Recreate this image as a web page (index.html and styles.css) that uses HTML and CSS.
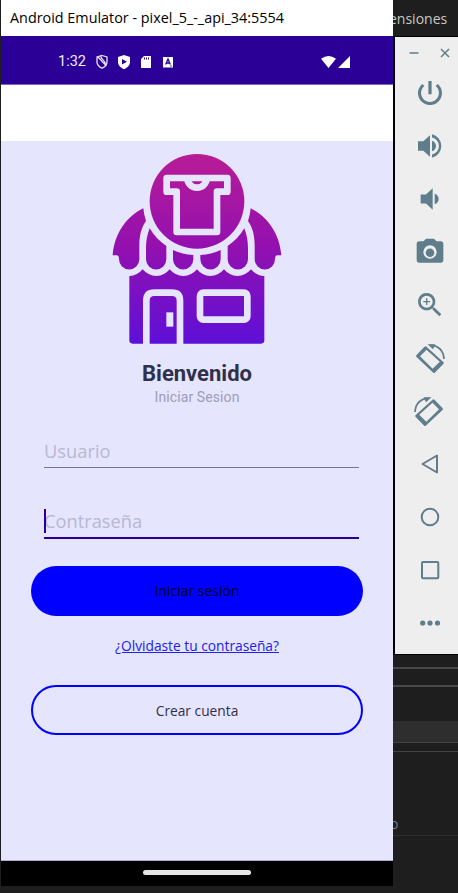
FILE: index.html
```html
<!DOCTYPE html>
<html lang="es">
<head>
<meta charset="utf-8">
<title>Android Emulator</title>
<link rel="stylesheet" href="styles.css">
</head>
<body>
<div class="desktop">
  <main class="phone">
    <header class="titlebar"><span>Android Emulator - pixel_5_-_api_34:5554</span></header>
    <div class="status">
      <span class="clock">1:32</span>
      <svg class="st" viewBox="0 0 14 16"><path d="M7 1.500 12 3v5c0 3-2.500 5-5 6.200C4.500 13 2 11 2 8V3zM3 3l8.500 9M6 2.500c-.5 3 5 3.500 4.500 8.500" fill="none" stroke="#e9e3f7" stroke-width="1.300"/></svg>
      <svg class="st" viewBox="0 0 14 16"><path fill="#fff" fill-rule="evenodd" d="M7 1l6 2v5c0 3.500-3 6-6 7.200C4 14 1 11.500 1 8V3zM5 5v5.500L10 7.700z"/></svg>
      <svg class="st" viewBox="0 0 14 16"><path fill="#fff" fill-rule="evenodd" d="M5 2h7v12H2V5zM5 3.500v2h1v-2zm2 0v2h1v-2zm2 0v2h1v-2z"/></svg>
      <svg class="st" viewBox="0 0 14 16"><path fill="#fff" d="M2 3h10v10.500H2z"/><path d="M4.700 10.500 7 5l2.300 5.500M5.500 9h3M9.500 12h1" fill="none" stroke="#2a0097" stroke-width="1.300"/></svg>
      <svg class="signal" viewBox="0 0 30 14"><path fill="#fff" d="M0 3.700Q7.500-1.500 15 3.700L7.500 13zM29 1v12H17z"/></svg>
    </div>
    <div class="appbar"></div>
    <section class="login">
      <svg class="logo" viewBox="0 0 585 615">
        <defs>
          <linearGradient id="g" gradientUnits="userSpaceOnUse" x1="0" y1="28" x2="0" y2="596"><stop offset="0" stop-color="#b81c96"/><stop offset=".5" stop-color="#9210b0"/><stop offset="1" stop-color="#5e10d8"/></linearGradient>
        </defs>
        <g fill="url(#g)">
          <circle cx="291" cy="169" r="142"/>
          <path d="M130 190C82 213 43 264 38 331h12q7 0 7 12a30.500 30.500 0 0 0 61 0V300C118 267 126 245 138 228Q132 210 130 190z"/>
          <path d="M149 250C141 270 138 290 138 310V343a30.500 30.500 0 0 0 61 0V303C179 290 162 272 149 250z"/>
          <path d="M219 315V343a30.500 30.500 0 0 0 61 0V330Q247 328 219 315z"/>
          <path d="M452 190C500 213 539 264 544 331h-12q-7 0-7 12a30.500 30.500 0 0 1-61 0V300C464 267 456 245 444 228Q450 210 452 190z"/>
          <path d="M433 250C441 270 444 290 444 310V343a30.500 30.500 0 0 1-61 0V303C403 290 420 272 433 250z"/>
          <path d="M362 315V343a30.500 30.500 0 0 1-61 0V330Q334 328 362 315z"/>
          <path d="M88 393Q112 392 128 373Q144 392 169 393Q194 392 209 373Q225 392 250 393Q275 392 291 373Q306 392 331 393Q356 392 372 373Q388 392 412 393Q437 392 453 373Q469 392 493 393V586q0 10-10 10H98q-10 0-10-10z"/>
        </g>
        <g class="cut">
          <path d="M200 99H382V140H351V261H230V140H200z"/>
          <path d="M262 99A29 29 0 0 0 320 99"/>
          <path d="M139 600V467Q139 443 163 443H216Q240 443 240 467V600"/>
          <rect x="300" y="443" width="142" height="81" rx="10"/>
        </g>
        <path class="handle" d="M199 502h21v43h-21z"/>
      </svg>
      <h1>Bienvenido</h1>
      <p class="sub">Iniciar Sesion</p>
      <div class="field user">Usuario</div>
      <div class="field pass">Contraseña</div>
      <div class="btn primary">Iniciar sesión</div>
      <a class="forgot">¿Olvidaste tu contraseña?</a>
      <div class="btn outline">Crear cuenta</div>
    </section>
    <footer class="nav"><i></i></footer>
  </main>
  <aside class="side">
    <div class="menu">ensiones</div>
    <div class="tools">
      <svg class="winctl" viewBox="0 0 64 29"><path d="M14.500 16h9M46 12l8 8m0-8-8 8" fill="none" stroke="#607d8b" stroke-width="1.500"/></svg>
      <svg viewBox="0 0 24 24"><path d="M13.200 3h-2.400v10h2.400zm4.630 2.170-1.600 1.600A6.700 6.700 0 0 1 18.700 12a6.700 6.700 0 1 1-10.900-5.230L6.170 5.170A9 9 0 1 0 21 12a8.940 8.940 0 0 0-3.170-6.830z"/></svg>
      <svg viewBox="0 0 24 24"><path d="M3 8.500v7h4l5 4.500V4L7 8.500zm13.500 3.500A4.500 4.500 0 0 0 13.500 7.970v8.050A4.470 4.470 0 0 0 16.500 12zM13.500 3.230v2.400a6.500 6.500 0 0 1 0 12.740v2.400a9 9 0 0 0 0-17.540z"/></svg>
      <svg viewBox="0 0 24 24"><path d="M18.500 12A4.500 4.500 0 0 0 15.500 7.970v8.050A4.470 4.470 0 0 0 18.500 12zM5 8.700v6.600h4l5 4.700V4L9 8.700z"/></svg>
      <svg viewBox="0 0 24 24"><circle cx="12" cy="12.500" r="3.200"/><path d="M9 2 7.170 4H4a2 2 0 0 0-2 2v12a2 2 0 0 0 2 2h16a2 2 0 0 0 2-2V6a2 2 0 0 0-2-2h-3.170L15 2zm3 15a5 5 0 1 1 0-10 5 5 0 0 1 0 10z"/></svg>
      <svg viewBox="0 0 24 24"><path d="M15.500 14h-.79l-.28-.27A6.500 6.500 0 1 0 13.730 14.430l.27.28v.79l5 4.990L20.490 19zm-6 0a4.500 4.500 0 1 1 0-9 4.500 4.500 0 0 1 0 9zM12 10h-2v2H9v-2H7V9h2V7h1v2h2z"/></svg>
      <svg viewBox="0 0 32 32"><g id="rot"><path fill-rule="evenodd" d="M10.500 4.700q1-1 2 0L29.300 20q1 1 0 2l-8.300 8.500q-1 1-2 0L2.500 15q-1-1 0-2zM12.500 7.700 6 14.300 18.700 26.800 25.800 19.700z"/><path d="M16 3.200Q29 4 30 17" fill="none" stroke="#607d8b" stroke-width="1.700"/><path d="M13.500 2.300l8 0-2.500 5z"/></g></svg>
      <svg viewBox="0 0 32 32"><use href="#rot" transform="matrix(-1 0 0 1 31 0)"/></svg>
      <svg viewBox="0 0 32 32"><path class="line" d="M23 7.500v17L8.500 16z"/></svg>
      <svg viewBox="0 0 32 32"><circle class="line" cx="16" cy="16" r="8.300"/></svg>
      <svg viewBox="0 0 32 32"><rect class="line" x="8" y="8" width="16.300" height="16.300" rx="1"/></svg>
      <svg viewBox="0 0 32 32"><circle cx="8.700" cy="16" r="2.600"/><circle cx="16" cy="16" r="2.600"/><circle cx="23.500" cy="16" r="2.600"/></svg>
    </div>
    <div class="ide">
      <div class="r1"></div><div class="r2"></div><div class="r3"></div><div class="r4"></div><div class="r5"></div><div class="r6"><span>o</span></div>
    </div>
  </aside>
</div>
</body>
</html>
```
FILE: styles.css
```css
* { box-sizing: border-box; }
body { margin: 0; background: #1e1e1e; overflow: hidden; }
.desktop { display: grid; grid-template-columns: 392px 65px; padding-left: 1px; height: 893px; }
.phone { display: flex; flex-direction: column; height: 886px; }
.titlebar { height: 36px; background: #fff; padding-left: 9px; font: 15px/35px "Open Sans", sans-serif; color: #000; white-space: nowrap; }
.titlebar span { display: inline-block; transform: scaleX(.958); transform-origin: left; }
.status { height: 49px; background: #2a0097; border-bottom: 1px solid #7f66c1; display: flex; align-items: center; gap: 8px; padding: 3px 42px 0 57px; }
.clock { font: 400 14.500px/20px Roboto, sans-serif; color: #f2eefb; width: 29px; padding-top: 1px; }
.st { width: 14px; height: 16px; }
.signal { width: 30px; height: 14px; margin-left: auto; }
.appbar { height: 56px; background: #fff; }
.login { height: 720px; background: #e5e5fe; border-bottom: 1px solid #b0b0cc; display: flex; flex-direction: column; align-items: center; }
.logo { width: 195px; height: 205px; margin: 4px 0 0 1px; flex: none; }
.cut { fill: none; stroke: #e5e5fe; stroke-width: 20; stroke-linejoin: round; }
.handle { fill: #e5e5fe; }
h1 { margin: 10px 0 0; font: 700 22px/28px Roboto, sans-serif; color: #30304a; }
.sub { margin: -1px 0 0; font: 14px/20px Roboto, sans-serif; letter-spacing: .1px; color: #9d9db8; }
.field { width: 315px; margin-left: 9px; font: 18.300px/26px "Open Sans", sans-serif; color: #b8b8d2; }
.user { height: 30px; margin-top: 31px; border-bottom: 1px solid #77758c; }
.pass { height: 31px; margin-top: 40px; border-bottom: 2px solid #2a0097; position: relative; }
.pass::before { content: ""; position: absolute; left: 0; top: 1px; width: 2px; height: 24px; background: #2a0097; }
.btn { width: 332px; height: 50px; border-radius: 25px; font: 14px/50px "Open Sans", sans-serif; text-align: center; flex: none; }
.primary { margin-top: 27px; background: #00f; color: #00002a; }
.forgot { margin-top: 20px; font: 13.750px/20px "Open Sans", sans-serif; color: #2020f0; text-decoration: underline; }
.outline { margin-top: 29px; border: 2px solid #00f; font-size: 13.750px; line-height: 47px; color: #30304a; }
.nav { height: 25px; background: #000; display: flex; justify-content: center; padding-top: 9px; }
.nav i { width: 108px; height: 5px; border-radius: 3px; background: #e5e5e5; }
.side { overflow: hidden; }
.menu { height: 36px; font: 14px/37px "Open Sans", sans-serif; color: #c8c8c8; margin-left: -4px; }
.tools { height: 619px; border: 1px solid #000; border-left-width: 2px; border-right: 0; background: #eee; display: flex; flex-direction: column; align-items: flex-start; }
.tools svg { width: 32px; height: 32px; margin: 0 0 21px 19px; fill: #607d8b; flex: none; }
.tools .winctl { width: 64px; height: 29px; margin: 0 0 11px; }
.tools .line { fill: none; stroke: #607d8b; stroke-width: 2; stroke-linejoin: round; }
.ide { height: 238px; }
.r1 { height: 14px; border-bottom: 2px solid #484848; }
.r2 { height: 18px; border-bottom: 2px solid #484848; }
.r3 { height: 34px; }
.r4 { height: 22px; background: #2e2e2e; border-bottom: 1px solid #424242; }
.r5 { height: 9px; border-bottom: 1px solid #424242; }
.r6 { height: 84px; border-bottom: 1px solid #2c2c2c; padding-top: 62px; font: 14px/20px "Open Sans", sans-serif; color: #777; }
.r6 span { margin-left: -3px; }
```
